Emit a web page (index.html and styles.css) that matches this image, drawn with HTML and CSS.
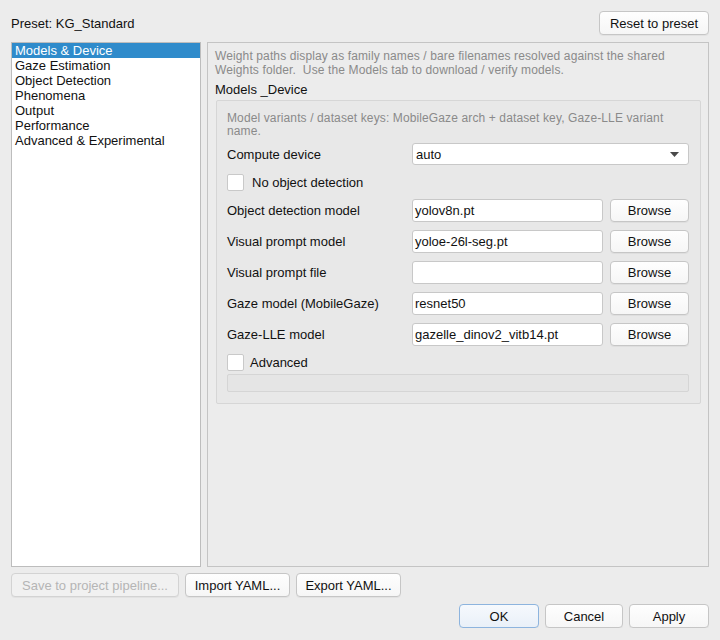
FILE: index.html
```html
<!DOCTYPE html>
<html lang="en">
<head>
    <meta charset="UTF-8">
    <title>Pipeline settings</title>
    <link rel="stylesheet" href="styles.css">
</head>
<body>
    <div class="dialog">
        <div class="header">
            <span>Preset: KG_Standard</span>
            <button class="btn reset-btn">Reset to preset</button>
        </div>

        <div class="main">
            <ul class="sections">
                <li class="selected">Models &amp; Device</li>
                <li>Gaze Estimation</li>
                <li>Object Detection</li>
                <li>Phenomena</li>
                <li>Output</li>
                <li>Performance</li>
                <li>Advanced &amp; Experimental</li>
            </ul>

            <div class="panel">
                <p class="hint">Weight paths display as family names / bare filenames resolved against the shared Weights folder.&nbsp; Use the Models tab to download / verify models.</p>
                <div class="group-title">Models _Device</div>

                <div class="group">
                    <p class="hint">Model variants / dataset keys: MobileGaze arch + dataset key, Gaze-LLE variant name.</p>

                    <div class="row combo-row">
                        <span class="label">Compute device</span>
                        <div class="combo">
                            <span>auto</span>
                            <svg width="9" height="5" viewBox="0 0 9 5"><path d="M0 0 L9 0 L4.5 5 Z" fill="#4a4a4a"/></svg>
                        </div>
                    </div>

                    <label class="check check-first"><span class="box"></span>No object detection</label>

                    <div class="row">
                        <span class="label">Object detection model</span>
                        <div class="field">yolov8n.pt</div>
                        <button class="btn browse">Browse</button>
                    </div>
                    <div class="row">
                        <span class="label">Visual prompt model</span>
                        <div class="field">yoloe-26l-seg.pt</div>
                        <button class="btn browse">Browse</button>
                    </div>
                    <div class="row">
                        <span class="label">Visual prompt file</span>
                        <div class="field"></div>
                        <button class="btn browse">Browse</button>
                    </div>
                    <div class="row">
                        <span class="label">Gaze model (MobileGaze)</span>
                        <div class="field">resnet50</div>
                        <button class="btn browse">Browse</button>
                    </div>
                    <div class="row">
                        <span class="label">Gaze-LLE model</span>
                        <div class="field">gazelle_dinov2_vitb14.pt</div>
                        <button class="btn browse">Browse</button>
                    </div>

                    <label class="check check-adv"><span class="box"></span>Advanced</label>
                    <div class="collapsed"></div>
                </div>
            </div>
        </div>

        <div class="tools">
            <button class="btn" disabled>Save to project pipeline...</button>
            <button class="btn">Import YAML...</button>
            <button class="btn">Export YAML...</button>
        </div>

        <div class="actions">
            <button class="btn default">OK</button>
            <button class="btn">Cancel</button>
            <button class="btn">Apply</button>
        </div>
    </div>
</body>
</html>
```

FILE: styles.css
```css
:root {
    --window-bg: #ececec;
    --text: #111111;
    --hint: #8a8a8a;
    --select: #2f8bcb;
}

* {
    margin: 0;
    padding: 0;
    box-sizing: border-box;
}

body {
    background-color: var(--window-bg);
    color: var(--text);
    font-family: "Liberation Sans", Arial, sans-serif;
    font-size: 13px;
}

.dialog {
    padding: 11px 11px 0 11px;
    display: flex;
    flex-direction: column;
}

.header {
    display: flex;
    justify-content: space-between;
    align-items: center;
    height: 24px;
}

.btn {
    font-family: inherit;
    font-size: 13px;
    color: var(--text);
    height: 24px;
    padding: 0;
    white-space: nowrap;
    background: linear-gradient(#fefefe, #f6f6f6);
    border: 1px solid #c6c6c6;
    border-radius: 4px;
    box-shadow: 0 1px 0 rgba(0,0,0,0.04);
}

.btn:disabled {
    color: #b5b5b5;
    border-color: #d3d3d3;
    background: #f1f1f1;
}

.reset-btn {
    width: 110px;
}

.main {
    display: flex;
    gap: 6px;
    height: 525px;
    margin-top: 7px;
}

.sections {
    flex: 0 0 190px;
    list-style: none;
    background: #fff;
    border: 1px solid #bdbdbd;
}

.sections li {
    height: 15px;
    line-height: 15px;
    padding-left: 3px;
}

.sections li.selected {
    background: var(--select);
    color: #fff;
}

.panel {
    flex: 1;
    min-width: 0;
    border: 1px solid #c4c4c4;
    padding: 6px 7px 0 7px;
}

.hint {
    color: var(--hint);
    font-size: 12px;
    letter-spacing: 0.12px;
    line-height: 14px;
}

.group-title {
    margin-top: 5px;
    line-height: 15px;
}

.group {
    margin: 3px 0 0 1px;
    background: #e8e8e8;
    border: 1px solid #d6d6d6;
    border-radius: 2px;
    padding: 11px 11px 11px 10px;
}

.group .hint {
    line-height: 13px;
}

.row {
    display: flex;
    align-items: center;
    height: 23px;
    margin-top: 8px;
}

.combo-row {
    margin-top: 5px;
    height: 22px;
}

.label {
    flex: 0 0 185px;
}

.combo {
    flex: 1;
    height: 22px;
    display: flex;
    justify-content: space-between;
    align-items: center;
    padding: 0 9px 0 3px;
    background: #fff;
    border: 1px solid #c8c8c8;
    border-radius: 3px;
}

.field {
    flex: 1;
    height: 23px;
    line-height: 21px;
    padding-left: 2px;
    background: #fff;
    border: 1px solid #c8c8c8;
    border-radius: 3px;
}

.browse {
    flex: 0 0 79px;
    margin-left: 7px;
    height: 23px;
}

.check {
    display: flex;
    align-items: center;
    gap: 8px;
    height: 17px;
}

.check-first {
    margin-top: 9px;
}

.check-adv {
    margin-top: 8px;
    gap: 6px;
}

.box {
    width: 17px;
    height: 17px;
    background: #fff;
    border: 1px solid #c9c9c9;
    border-radius: 2px;
}

.collapsed {
    height: 18px;
    margin-top: 3px;
    background: #e5e5e5;
    border: 1px solid #d5d5d5;
    border-radius: 2px;
}

.tools {
    display: flex;
    gap: 6px;
    margin-top: 6px;
}

.tools .btn:nth-child(1) { width: 168px; }
.tools .btn:nth-child(2) { width: 105px; }
.tools .btn:nth-child(3) { width: 105px; }

.actions {
    display: flex;
    justify-content: flex-end;
    gap: 6px;
    margin-top: 7px;
}

.actions .btn {
    width: 80px;
}

.actions .btn:nth-child(2) { width: 78px; }

.actions .btn.default {
    border-color: #8db4de;
    background: linear-gradient(#f6f9fd, #e9f0f8);
}
```
